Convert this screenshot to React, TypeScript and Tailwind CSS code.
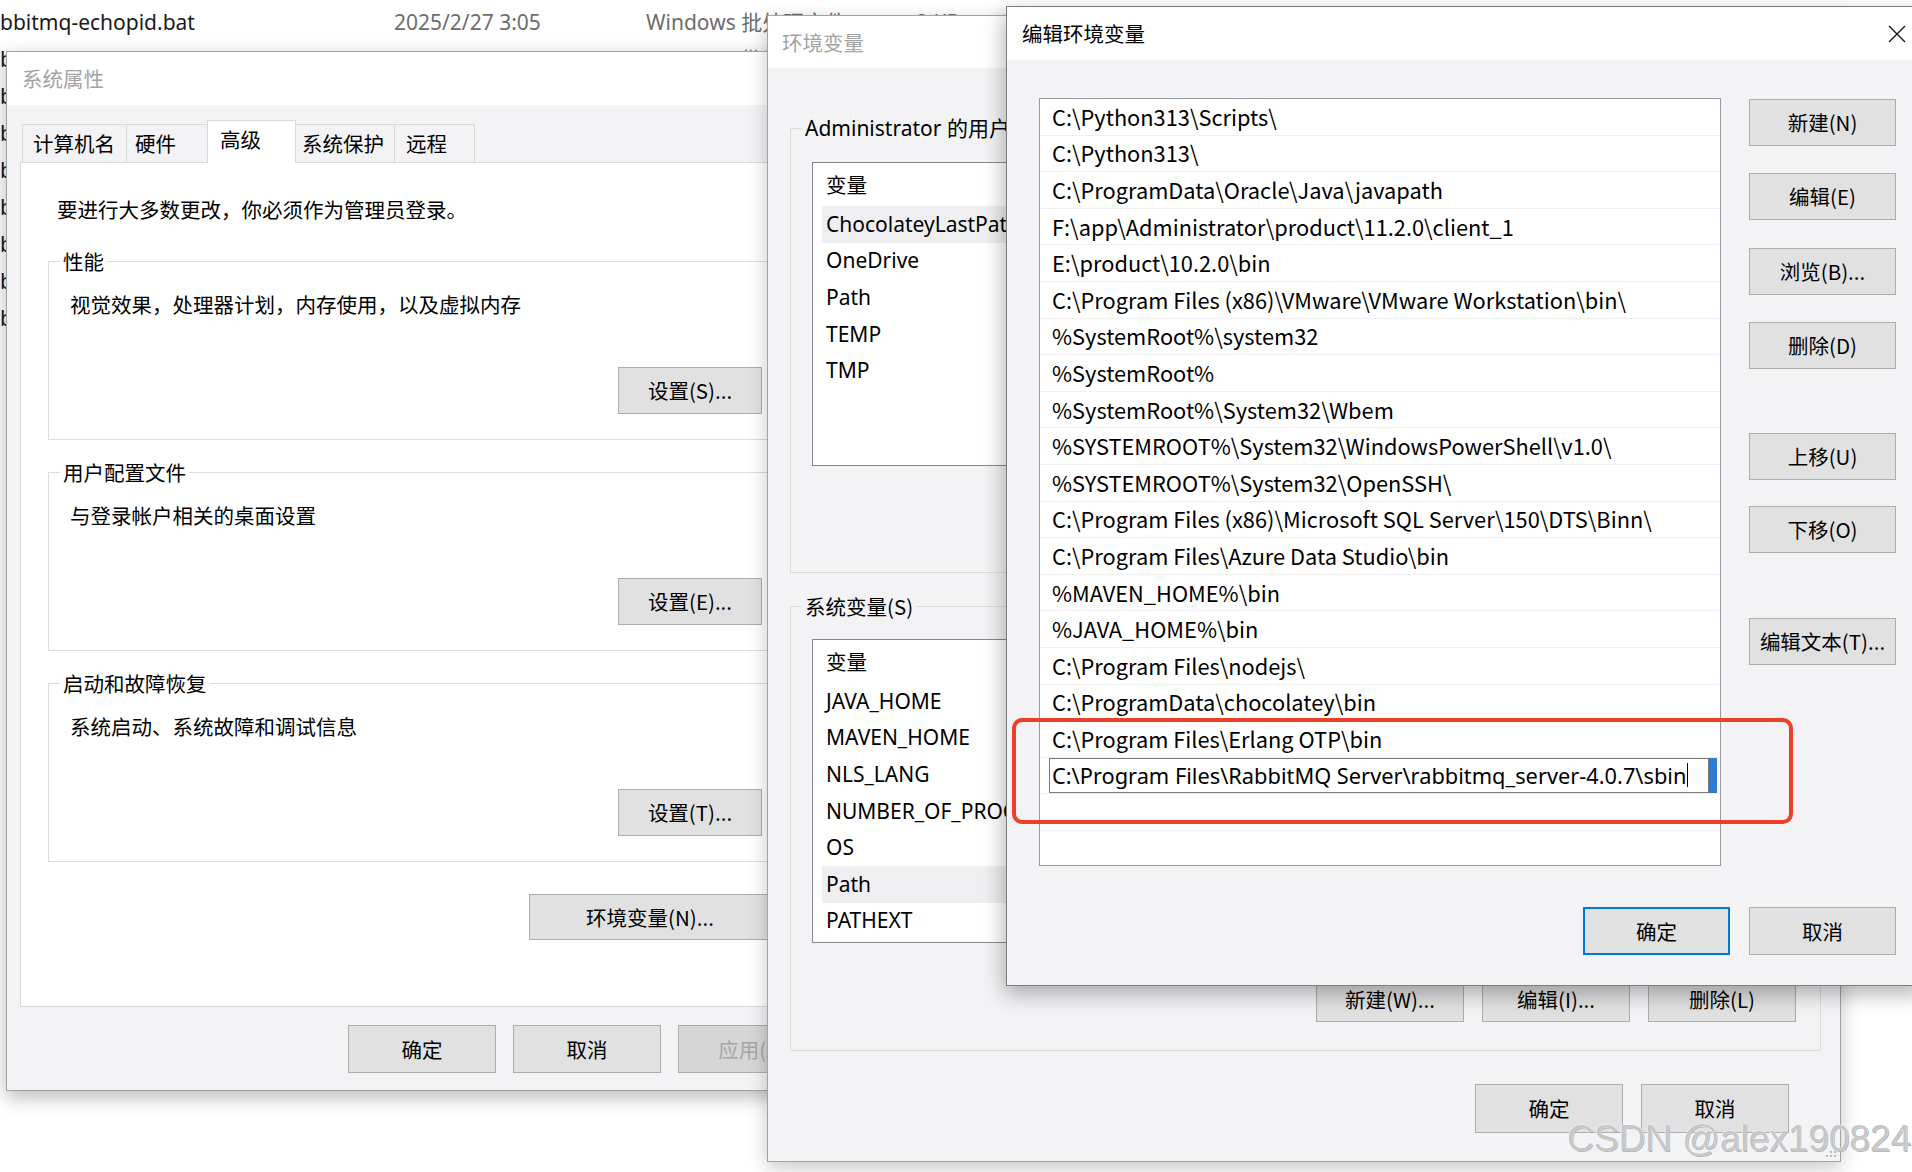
import React from "react";

const ui = "font-['Noto_Sans_CJK_SC',sans-serif]";
const seg = "font-['Noto_Sans','Noto_Sans_CJK_SC',sans-serif]";

type BtnProps = {
  label: string;
  className?: string;
  focused?: boolean;
  disabled?: boolean;
};

function Btn({ label, className = "", focused = false, disabled = false }: BtnProps) {
  const border = focused ? "border-2 border-[#0078d7]" : "border border-[#adadad]";
  const tone = disabled ? "bg-[#d6d6d6] text-[#a6a6a6]" : "bg-[#e1e1e1] text-black";
  return (
    <div className={`flex shrink-0 items-center justify-center ${ui} text-[20.5px] leading-none ${border} ${tone} ${className}`}>
      {label}
    </div>
  );
}

const explorerRows = [
  "rabbitmq-echopid.bat",
  "rabbitmq-defaults.bat",
  "rabbitmq-diagnostics.bat",
  "rabbitmq-env.bat",
  "rabbitmq-plugins.bat",
  "rabbitmq-queues.bat",
  "rabbitmq-server.bat",
  "rabbitmq-service.bat",
  "rabbitmq-streams.bat",
];

const tabs = [
  { label: "计算机名", w: "w-[105px]", pl: "pl-[10px]" },
  { label: "硬件", w: "w-[82px]", pl: "pl-[8px]" },
  { label: "高级", w: "w-[89px]", pl: "pl-[12px]", active: true },
  { label: "系统保护", w: "w-[100px]", pl: "pl-[6px]" },
  { label: "远程", w: "w-[81px]", pl: "pl-[11px]" },
];

const groups = [
  { title: "性能", desc: "视觉效果，处理器计划，内存使用，以及虚拟内存", btn: "设置(S)..." },
  { title: "用户配置文件", desc: "与登录帐户相关的桌面设置", btn: "设置(E)..." },
  { title: "启动和故障恢复", desc: "系统启动、系统故障和调试信息", btn: "设置(T)..." },
];

const userVars = ["ChocolateyLastPathUpdate", "OneDrive", "Path", "TEMP", "TMP"];
const sysVars = ["JAVA_HOME", "MAVEN_HOME", "NLS_LANG", "NUMBER_OF_PROCESSORS", "OS", "Path", "PATHEXT"];

const paths = [
  "C:\\Python313\\Scripts\\",
  "C:\\Python313\\",
  "C:\\ProgramData\\Oracle\\Java\\javapath",
  "F:\\app\\Administrator\\product\\11.2.0\\client_1",
  "E:\\product\\10.2.0\\bin",
  "C:\\Program Files (x86)\\VMware\\VMware Workstation\\bin\\",
  "%SystemRoot%\\system32",
  "%SystemRoot%",
  "%SystemRoot%\\System32\\Wbem",
  "%SYSTEMROOT%\\System32\\WindowsPowerShell\\v1.0\\",
  "%SYSTEMROOT%\\System32\\OpenSSH\\",
  "C:\\Program Files (x86)\\Microsoft SQL Server\\150\\DTS\\Binn\\",
  "C:\\Program Files\\Azure Data Studio\\bin",
  "%MAVEN_HOME%\\bin",
  "%JAVA_HOME%\\bin",
  "C:\\Program Files\\nodejs\\",
  "C:\\ProgramData\\chocolatey\\bin",
  "C:\\Program Files\\Erlang OTP\\bin",
];

const editing = "C:\\Program Files\\RabbitMQ Server\\rabbitmq_server-4.0.7\\sbin";

function VarList({ items, selected }: { items: string[]; selected: string }) {
  return (
    <div className={`ml-[21px] h-[304px] w-[988px] overflow-hidden border border-[#828790] bg-white ${seg} text-[21px] text-black`}>
      <div className={`flex h-[43px] items-center pl-[13px] ${ui} text-[20.5px] leading-none`}>变量</div>
      <div className="ml-[9px]">
        {items.map((v, i) => (
          <div
            key={v + i}
            className={`flex h-[36.6px] items-center whitespace-nowrap pl-[4px] leading-none ${v === selected ? "bg-[#efeff1]" : ""}`}
          >
            {v}
          </div>
        ))}
      </div>
    </div>
  );
}

function Grip() {
  return (
    <svg width="12" height="12" viewBox="0 0 12 12" className="absolute bottom-[3px] right-[3px]">
      {[
        [10, 2],
        [10, 6],
        [6, 6],
        [10, 10],
        [6, 10],
        [2, 10],
      ].map(([x, y]) => (
        <rect key={`${x}-${y}`} x={x - 1} y={y - 1} width="2" height="2" fill="#b8b8b8" />
      ))}
    </svg>
  );
}

export default function App() {
  return (
    <div className="relative h-[1172px] w-[1912px] overflow-hidden bg-white">
      {/* explorer list behind the dialogs */}
      <div className={`pt-[4px] ${seg} text-[21px] leading-none`}>
        {explorerRows.map((name) => (
          <div key={name} className="flex h-[37px] items-center whitespace-nowrap">
            <div className="-ml-[20px] w-[414px] text-[#1a1a1a]">{name}</div>
            <div className="w-[252px] text-[#6d6d6d]">2025/2/27 3:05</div>
            <div className="w-[270px] text-[#6d6d6d]">Windows 批处理文件</div>
            <div className="w-[60px] text-[#6d6d6d]">2 KB</div>
          </div>
        ))}
      </div>

      {/* 系统属性 */}
      <div className="absolute left-[6px] top-[51px] flex h-[1040px] w-[840px] flex-col border border-[#a3a3a3] bg-[#f3f2f5] shadow-[0_6px_18px_rgba(0,0,0,0.28)]">
        <div className={`flex h-[53px] items-center bg-white pl-[15px] ${ui} text-[20.5px] leading-none text-[#a3a3a3]`}>系统属性</div>
        <div className={`flex h-[57px] items-end pl-[15px] ${ui} text-[20.5px] leading-none`}>
          {tabs.map((t, i) => (
            <div
              key={t.label}
              className={`flex items-center border border-[#d9d9d9] ${t.w} ${t.pl} ${i > 0 ? "-ml-px" : ""} ${
                t.active ? "relative z-10 -mb-px h-[43px] border-b-0 bg-white pb-[6px]" : "h-[38px] border-b-0 bg-[#f3f2f5]"
              }`}
            >
              {t.label}
            </div>
          ))}
        </div>
        <div className={`ml-[13px] flex h-[845px] w-[820px] flex-col border border-[#d9d9d9] bg-white ${ui} text-[20.5px] text-black`}>
          <p className="mt-[32px] pl-[36px] leading-[28px]">要进行大多数更改，你必须作为管理员登录。</p>
          {groups.map((g, i) => (
            <fieldset
              key={g.title}
              className={`mx-[27px] h-[193px] border border-[#dcdcdc] ${i === 0 ? "mt-[24px]" : "mt-[18px]"}`}
            >
              <legend className="ml-[11px] px-[3px] leading-[28px]">{g.title}</legend>
              <p className="mt-[15px] pl-[21px] leading-[28px]">{g.desc}</p>
              <div className="mt-[49px] flex justify-end pr-[49px]">
                <Btn label={g.btn} className="h-[47px] w-[144px]" />
              </div>
            </fieldset>
          ))}
          <div className="mt-[32px] pl-[508px]">
            <Btn label="环境变量(N)..." className="h-[46px] w-[242px]" />
          </div>
        </div>
        <div className="mt-[18px] flex gap-[17px] pl-[341px]">
          <Btn label="确定" className="h-[48px] w-[148px]" />
          <Btn label="取消" className="h-[48px] w-[148px]" />
          <Btn label="应用(A)" disabled className="h-[48px] w-[148px]" />
        </div>
      </div>

      {/* 环境变量 */}
      <div className="absolute left-[767px] top-[15px] flex h-[1147px] w-[1074px] flex-col border border-[#a3a3a3] bg-[#f3f2f5] shadow-[0_6px_18px_rgba(0,0,0,0.22)]">
        <div className={`flex h-[52px] shrink-0 items-center bg-white pl-[14px] ${ui} text-[20.5px] leading-none text-[#a3a3a3]`}>环境变量</div>
        <fieldset className="ml-[22px] mr-[19px] mt-[46px] h-[459px] shrink-0 border border-[#dcdcdc]">
          <legend className={`ml-[11px] px-[3px] ${seg} text-[21px] leading-[28px]`}>Administrator 的用户变量(U)</legend>
          <div className="mt-[20px]">
            <VarList items={userVars} selected="ChocolateyLastPathUpdate" />
          </div>
        </fieldset>
        <fieldset className="ml-[22px] mr-[19px] mt-[19px] h-[459px] shrink-0 border border-[#dcdcdc]">
          <legend className={`ml-[11px] px-[3px] ${ui} text-[20.5px] leading-[28px]`}>系统变量(S)</legend>
          <div className="mt-[19px]">
            <VarList items={sysVars} selected="Path" />
          </div>
          <div className="mt-[33px] flex justify-end gap-[18px] pr-[24px]">
            <Btn label="新建(W)..." className="h-[46px] w-[148px]" />
            <Btn label="编辑(I)..." className="h-[46px] w-[148px]" />
            <Btn label="删除(L)" className="h-[46px] w-[148px]" />
          </div>
        </fieldset>
        <div className="mt-[33px] flex justify-end gap-[18px] pr-[51px]">
          <Btn label="确定" className="h-[49px] w-[148px]" />
          <Btn label="取消" className="h-[49px] w-[148px]" />
        </div>
        <Grip />
      </div>

      {/* 编辑环境变量 */}
      <div className="absolute left-[1006px] top-[6px] flex h-[980px] w-[920px] flex-col border border-[#7d7d7d] bg-[#f3f2f5] shadow-[-2px_8px_20px_rgba(0,0,0,0.3)]">
        <div className={`flex h-[53px] shrink-0 items-center bg-white pl-[15px] pr-[19px] ${ui} text-[20.5px] leading-none text-black`}>
          <span>编辑环境变量</span>
          <svg width="18" height="18" viewBox="0 0 18 18" className="ml-auto">
            <path d="M1 1 L17 17 M17 1 L1 17" stroke="#111" strokeWidth="1.3" fill="none" />
          </svg>
        </div>
        <div className="ml-[32px] mt-[38px] flex">
          <div className={`h-[768px] w-[682px] overflow-hidden border border-[#9a9aa2] bg-white ${ui} text-[21.8px] leading-none text-black`}>
            {paths.map((p) => (
              <div key={p} className="flex h-[36.6px] items-center whitespace-nowrap border-b border-[#f0f0f2] pl-[12px]">
                {p}
              </div>
            ))}
            <div className="flex h-[36.6px] items-center border-b border-[#f0f0f2] pl-[9px]">
              <div className={`flex h-[35px] w-[660px] items-center whitespace-nowrap border border-[#7a7a7a] bg-white pl-[2px] ${seg} text-[21.8px]`}>
                {editing}
                <span className="ml-px inline-block h-[24px] w-px bg-black" />
              </div>
              <div className="h-[35px] w-[8px] bg-[#2f7ad6]" />
            </div>
            <div className="h-[36.6px] border-b border-[#f0f0f2]" />
          </div>
          <div className="ml-[28px] flex flex-col">
            <Btn label="新建(N)" className="mt-px h-[47px] w-[147px]" />
            <Btn label="编辑(E)" className="mt-[27px] h-[47px] w-[147px]" />
            <Btn label="浏览(B)..." className="mt-[28px] h-[47px] w-[147px]" />
            <Btn label="删除(D)" className="mt-[27px] h-[47px] w-[147px]" />
            <Btn label="上移(U)" className="mt-[64px] h-[47px] w-[147px]" />
            <Btn label="下移(O)" className="mt-[26px] h-[47px] w-[147px]" />
            <Btn label="编辑文本(T)..." className="mt-[65px] h-[47px] w-[147px]" />
          </div>
        </div>
        <div className="mt-[41px] flex gap-[19px] pl-[576px]">
          <Btn label="确定" focused className="h-[48px] w-[147px]" />
          <Btn label="取消" className="h-[48px] w-[147px]" />
        </div>
      </div>

      {/* red annotation */}
      <div className="absolute left-[1012px] top-[718px] h-[106px] w-[781px] rounded-[10px] border-[4px] border-[#ea4128]" />

      {/* watermark */}
      <div className="absolute left-[1567px] top-[1120px] font-['Liberation_Sans',sans-serif] text-[37px] leading-none text-[#c6c6c6] [text-shadow:0_0_1px_#fff,0_0_2px_#fff,1px_1px_0_#9a9a9a]">
        CSDN @alex190824
      </div>
    </div>
  );
}
